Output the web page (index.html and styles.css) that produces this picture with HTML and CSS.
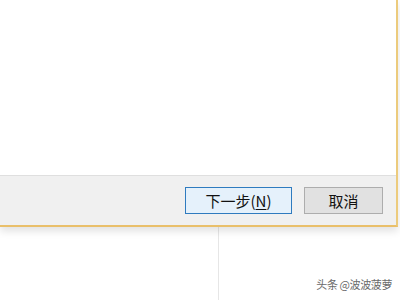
FILE: index.html
```html
<!DOCTYPE html>
<html lang="zh-CN">
<head>
    <meta charset="UTF-8">
    <title>向导</title>
    <link rel="stylesheet" href="styles.css">
</head>
<body>
    <div id="wizard">
        <div class="wizard-body"></div>
        <div class="wizard-footer">
            <button class="btn btn-default">下一步(<u>N</u>)</button>
            <button class="btn">取消</button>
        </div>
    </div>

    <!-- page behind the dialog -->
    <div id="backdrop">
        <div class="pane-left"></div>
        <div class="pane-right"></div>
    </div>

    <div class="watermark">头条 @波波菠萝</div>
</body>
</html>
```

FILE: styles.css
```css
body {
    margin: 0;
    width: 400px;
    height: 300px;
    overflow: hidden;
    background-color: #fff;
    font-family: "Noto Sans CJK SC", "Liberation Sans", sans-serif;
    position: relative;
}
#wizard {
    width: 396px;
    border-right: 2px solid #eccb7d;
    border-bottom: 2px solid #e9bf6a;
    background-color: #fff;
    box-shadow: 0 4px 8px rgba(0, 0, 0, 0.12);
    position: relative;
    z-index: 1;
}
.wizard-body {
    height: 175px;
}
.wizard-footer {
    height: 50px;
    border-top: 1px solid #dfdfdf;
    background-color: #f0f0f0;
    display: flex;
    align-items: flex-start;
    justify-content: flex-end;
    padding-top: 11px;
    padding-right: 13px;
    box-sizing: border-box;
    gap: 12px;
}
.btn {
    height: 27px;
    width: 79px;
    padding: 0;
    background-color: #e1e1e1;
    border: 1px solid #adadad;
    font-family: "Noto Sans CJK SC", "Liberation Sans", sans-serif;
    font-size: 15px;
    color: #111;
    line-height: 23px;
}
.btn-default {
    width: 107px;
    background-color: #e5f1fb;
    border-color: #2f7bbf;
}
.btn u {
    text-underline-offset: 2px;
}

#backdrop {
    display: flex;
    height: 73px;
}
.pane-left {
    width: 218px;
    border-right: 1px solid #e6e6e6;
}
.pane-right {
    flex-grow: 1;
}

.watermark {
    position: absolute;
    right: 8px;
    top: 276px;
    font-size: 11px;
    color: #6a6a6a;
    letter-spacing: -0.4px;
}
```
